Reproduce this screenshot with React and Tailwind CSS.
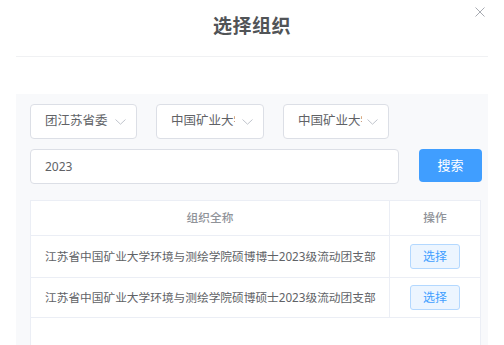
import { useState } from "react";

const orgs = [
  "江苏省中国矿业大学环境与测绘学院硕博博士2023级流动团支部",
  "江苏省中国矿业大学环境与测绘学院硕博硕士2023级流动团支部",
];

function Chevron() {
  return (
    <svg width="11" height="6" viewBox="0 0 11 6" fill="none" className="shrink-0">
      <path d="M0.5 0.5 L5.5 5.2 L10.5 0.5" stroke="#c0c4cc" strokeWidth="1" />
    </svg>
  );
}

function Select({ label, className }) {
  return (
    <div
      className={
        "h-[35px] flex items-center justify-between pl-[14px] pr-[10px] bg-white border border-[#dcdfe6] rounded-[4px] " +
        className
      }
    >
      <span className="text-[12.5px] text-[#606266] whitespace-nowrap overflow-hidden w-[64px]">{label}</span>
      <Chevron />
    </div>
  );
}

export default function App() {
  const [keyword, setKeyword] = useState("2023");

  return (
    <div
      className="w-[504px] h-[345px] bg-white overflow-hidden relative"
      style={{ fontFamily: '"Noto Sans", "Noto Sans CJK SC", sans-serif' }}
    >
      {/* cerrar */}
      <button className="absolute right-[19px] top-[7px] w-[10px] h-[10px]">
        <svg width="10" height="10" viewBox="0 0 10 10">
          <path d="M0.5 0.5 L9.5 9.5 M9.5 0.5 L0.5 9.5" stroke="#a8abb2" strokeWidth="1" />
        </svg>
      </button>

      <div className="mx-[16px]">
        {/* titulo */}
        <div className="h-[57px] flex items-center justify-center border-b border-[#f0f1f3] pb-[4px]">
          <h2 className="text-[19px] font-bold text-[#515457] tracking-[0.5px]">选择组织</h2>
        </div>

        {/* panel */}
        <div className="mt-[37px] bg-[#f8f9fb] pl-[14px] pr-[5px] pt-[10px] h-[260px]">
          <div className="flex gap-[19px]">
            <Select label="团江苏省委" className="w-[107px]" />
            <Select label="中国矿业大学" className="w-[108px]" />
            <Select label="中国矿业大学" className="w-[106px]" />
          </div>

          <div className="flex items-start mt-[10px]">
            <input
              value={keyword}
              onChange={(e) => setKeyword(e.target.value)}
              className="w-[369px] h-[35px] px-[14px] bg-white border border-[#dcdfe6] rounded-[4px] text-[12px] text-[#606266] outline-none"
            />
            <button className="ml-[20px] w-[63px] h-[33px] bg-[#409eff] rounded-[4px] text-white text-[13px]">
              搜索
            </button>
          </div>

          {/* tabla */}
          <div className="mt-[16px] w-[451px] h-[200px] bg-white border border-[#ebeef5]">
            <div className="flex h-[35px] border-b border-[#ebeef5] text-[11.7px] font-medium text-[#909399]">
              <div className="w-[359px] flex items-center justify-center border-r border-[#ebeef5]">组织全称</div>
              <div className="flex-1 flex items-center justify-center">操作</div>
            </div>
            {orgs.map((name, i) => (
              <div
                key={name}
                className={
                  "flex border-b border-[#ebeef5] " + (i === 0 ? "h-[42px]" : "h-[40px]")
                }
              >
                <div className="w-[359px] flex items-center pl-[14px] border-r border-[#ebeef5] text-[11.7px] text-[#606266] whitespace-nowrap">
                  {name}
                </div>
                <div className="flex-1 flex items-center justify-center">
                  <button className="w-[50px] h-[25px] bg-[#ecf5ff] border border-[#b3d8ff] rounded-[3px] text-[12px] text-[#409eff]">
                    选择
                  </button>
                </div>
              </div>
            ))}
          </div>
        </div>
      </div>
    </div>
  );
}
